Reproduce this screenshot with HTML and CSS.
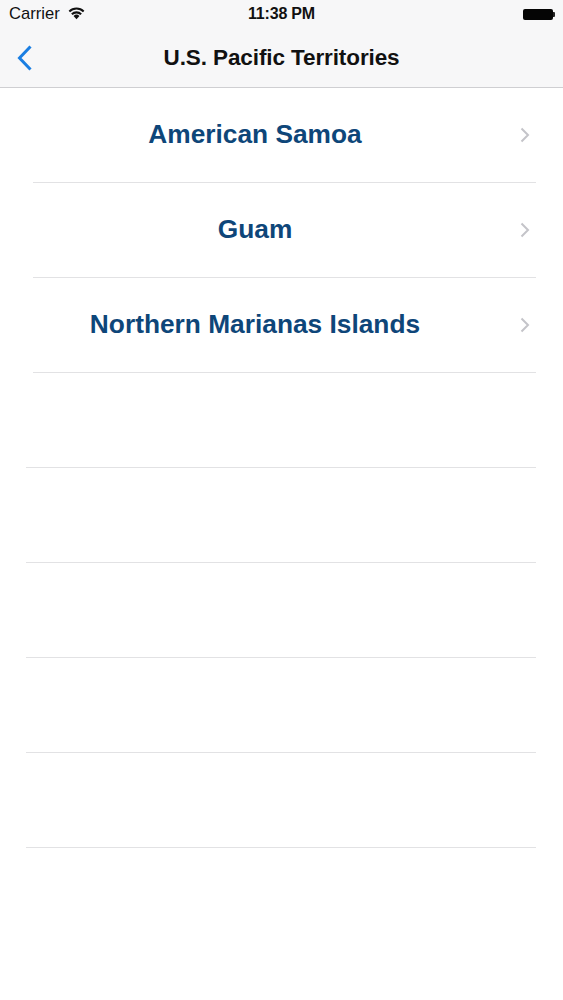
FILE: index.html
```html
<html>

<head>
    <title>U.S. Pacific Territories</title>
    <link rel="stylesheet" href="styles.css">
</head>

<body>
    <div id="screen">
        <div class="status">
            <div class="status-left">
                <span class="carrier">Carrier</span>
                <svg class="wifi" width="19" height="14" viewBox="0 0 18 13">
                    <path d="M9 12.5 L6.2 9.4 A4 4 0 0 1 11.8 9.4 Z" fill="#111" />
                    <path d="M4.6 7.7 A6.3 6.3 0 0 1 13.4 7.7" fill="none" stroke="#111" stroke-width="1.9" />
                    <path d="M2.2 5.1 A9.6 9.6 0 0 1 15.8 5.1" fill="none" stroke="#111" stroke-width="1.9" />
                </svg>
            </div>
            <span class="time">11:38 PM</span>
            <div class="status-right">
                <div class="battery">
                    <div class="battery-body"></div>
                    <div class="battery-nub"></div>
                </div>
            </div>
        </div>
        <div class="navbar">
            <div class="back">
                <svg width="18" height="28" viewBox="0 0 18 28">
                    <path d="M14.5 2.5 L3.5 14 L14.5 25.5" fill="none" stroke="#1a7ee2" stroke-width="3" />
                </svg>
            </div>
            <h1 class="title">U.S. Pacific Territories</h1>
            <div class="nav-spacer"></div>
        </div>
        <div class="list">
            <div class="row filled">
                <span class="label">American Samoa</span>
                <span class="accessory">
                    <svg width="10" height="16" viewBox="0 0 10 16">
                        <path d="M1.5 1.5 L8 8 L1.5 14.5" fill="none" stroke="#c4c4c9" stroke-width="2" />
                    </svg>
                </span>
            </div>
            <div class="row filled">
                <span class="label">Guam</span>
                <span class="accessory">
                    <svg width="10" height="16" viewBox="0 0 10 16">
                        <path d="M1.5 1.5 L8 8 L1.5 14.5" fill="none" stroke="#c4c4c9" stroke-width="2" />
                    </svg>
                </span>
            </div>
            <div class="row filled">
                <span class="label">Northern Marianas Islands</span>
                <span class="accessory">
                    <svg width="10" height="16" viewBox="0 0 10 16">
                        <path d="M1.5 1.5 L8 8 L1.5 14.5" fill="none" stroke="#c4c4c9" stroke-width="2" />
                    </svg>
                </span>
            </div>
            <div class="row empty"></div>
            <div class="row empty"></div>
            <div class="row empty"></div>
            <div class="row empty"></div>
            <div class="row empty"></div>
        </div>
    </div>
</body>

</html>
```

FILE: styles.css
```css
body {
    margin: 0;
    background: #ffffff;
    font-family: "Liberation Sans", Arial, sans-serif;
}

#screen {
    width: 563px;
    display: flex;
    flex-direction: column;
}

.status {
    height: 28px;
    background: #f7f7f8;
    display: grid;
    grid-template-columns: 1fr auto 1fr;
    align-items: center;
    font-size: 16.6px;
    color: #111;
}

.status-left {
    display: flex;
    align-items: center;
    gap: 7px;
    padding-left: 9px;
}

.wifi {
    margin-top: -3px;
}

.time {
    font-size: 16px;
    font-weight: bold;
    letter-spacing: -0.2px;
}

.status-right {
    display: flex;
    justify-content: flex-end;
    padding-right: 8px;
}

.battery {
    display: flex;
    align-items: center;
}

.battery-body {
    width: 30px;
    height: 11px;
    background: #050505;
    border-radius: 2px;
}

.battery-nub {
    width: 2px;
    height: 5px;
    background: #222;
    border-radius: 0 1px 1px 0;
}

.navbar {
    height: 59px;
    background: #f7f7f8;
    border-bottom: 1px solid #cfcfd2;
    display: grid;
    grid-template-columns: 80px 1fr 80px;
    align-items: center;
}

.back {
    display: flex;
    padding-left: 16px;
}

.title {
    margin: 0;
    text-align: center;
    font-size: 22.5px;
    font-weight: bold;
    color: #111;
    letter-spacing: -0.1px;
}

.list {
    display: flex;
    flex-direction: column;
}

.row {
    height: 94px;
    border-bottom: 1px solid #e2e2e4;
    margin-right: 27px;
}

.row.filled {
    margin-left: 33px;
    display: grid;
    grid-template-columns: 1fr 59px;
    align-items: center;
}

.row.empty {
    margin-left: 26px;
}

.label {
    text-align: center;
    font-size: 26.3px;
    font-weight: bold;
    color: #0e4679;
    margin-top: -1px;
}

.accessory {
    display: flex;
    justify-content: flex-end;
    padding-right: 6px;
}
```
